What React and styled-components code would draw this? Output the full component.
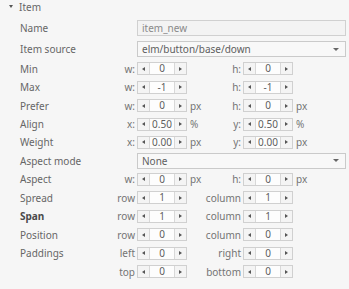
import React from 'react'
import styled, { createGlobalStyle } from 'styled-components'

const GlobalStyle = createGlobalStyle`
  html, body {
    margin: 0;
    padding: 0;
    background: #f6f6f6;
  }
  body {
    font-family: "Noto Sans", "DejaVu Sans", sans-serif;
    font-size: 10px;
    color: #666;
  }
`

const Panel = styled.div`
  width: 349px;
  height: 289px;
  overflow: hidden;
  background: #f6f6f6;
`

const Header = styled.div`
  display: flex;
  align-items: flex-start;
  height: 17.5px;
  line-height: 14px;
  padding-left: 9px;
`

const Caret = styled.span`
  width: 0;
  height: 0;
  margin-top: 5px;
  margin-right: 6px;
  border-left: 2.5px solid transparent;
  border-right: 2.5px solid transparent;
  border-top: 3px solid #555;
`

const Row = styled.div`
  display: grid;
  align-items: center;
  height: ${p => (p.$tall ? '21px' : '18.45px')};
  padding-left: 20px;
  grid-template-columns: ${p => (p.$wide ? '117px 209px' : '117px 50px 56px 50px 1fr')};
`

const LabelCell = styled.div`
  display: flex;
  justify-content: space-between;
  align-items: center;
  padding-right: 2px;
  white-space: nowrap;
`

const Label = styled.span`
  font-weight: ${p => (p.$bold ? 700 : 400)};
  color: ${p => (p.$bold ? '#4a4a4a' : '#666')};
`

const SubLabel = styled.span`
  color: #747474;
`

const MidCell = styled.div`
  display: flex;
  justify-content: space-between;
  align-items: center;
  padding-left: 3px;
  padding-right: 2px;
  white-space: nowrap;
`

const Unit = styled.span`
  color: #747474;
  padding-left: ${p => p.$pad || 0}px;
`

const SpinBox = styled.div`
  display: grid;
  grid-template-columns: 12px 1fr 12px;
  height: 13px;
  box-sizing: border-box;
  border: 1px solid #d0d0d0;
  background: #fbfbfb;
`

const SpinButton = styled.div`
  display: flex;
  align-items: center;
  justify-content: center;
  background: #f4f4f4;
  ${p => (p.$side === 'left' ? 'border-right: 1px solid #d8d8d8;' : 'border-left: 1px solid #d8d8d8;')}
`

const Arrow = styled.span`
  width: 0;
  height: 0;
  border-top: 2.5px solid transparent;
  border-bottom: 2.5px solid transparent;
  ${p => (p.$dir === 'left' ? 'border-right: 3px solid #555;' : 'border-left: 3px solid #555;')}
`

const SpinValue = styled.div`
  text-align: center;
  line-height: 11px;
  color: #5e5e5e;
  background: #fdfdfd;
`

const TextField = styled.div`
  height: 16px;
  box-sizing: border-box;
  border: 1px solid #d0d0d0;
  background: #f3f3f3;
  color: #8a8a8a;
  padding-left: 4px;
  line-height: 14px;
`

const Combo = styled.div`
  display: flex;
  align-items: center;
  justify-content: space-between;
  height: 16px;
  box-sizing: border-box;
  border: 1px solid #cacaca;
  background: #f8f8f8;
  color: #5e5e5e;
  padding: 0 6px 0 4px;
  line-height: 14px;
`

const ComboArrow = styled.span`
  width: 0;
  height: 0;
  border-left: 3px solid transparent;
  border-right: 3px solid transparent;
  border-top: 3px solid #666;
`

const Spinner = ({ value }) => (
  <SpinBox>
    <SpinButton $side="left">
      <Arrow $dir="left" />
    </SpinButton>
    <SpinValue>{value}</SpinValue>
    <SpinButton $side="right">
      <Arrow $dir="right" />
    </SpinButton>
  </SpinBox>
)

const rows = [
  { label: 'Min', a: 'w:', b: 'h:', va: '0', vb: '0' },
  { label: 'Max', a: 'w:', b: 'h:', va: '-1', vb: '-1' },
  { label: 'Prefer', a: 'w:', b: 'h:', va: '0', vb: '0', unit: 'px' },
  { label: 'Align', a: 'x:', b: 'y:', va: '0.50', vb: '0.50', unit: '%' },
  { label: 'Weight', a: 'x:', b: 'y:', va: '0.00', vb: '0.00', unit: 'px' },
  { combo: 'Aspect mode', value: 'None' },
  { label: 'Aspect', a: 'w:', b: 'h:', va: '0', vb: '0', unit: 'px' },
  { label: 'Spread', a: 'row', b: 'column', va: '1', vb: '1' },
  { label: 'Span', a: 'row', b: 'column', va: '1', vb: '1', bold: true },
  { label: 'Position', a: 'row', b: 'column', va: '0', vb: '0' },
  { label: 'Paddings', a: 'left', b: 'right', va: '0', vb: '0' },
  { label: '', a: 'top', b: 'bottom', va: '0', vb: '0' },
]

const PairRow = ({ row }) => (
  <Row>
    <LabelCell>
      <Label $bold={row.bold}>{row.label}</Label>
      <SubLabel>{row.a}</SubLabel>
    </LabelCell>
    <Spinner value={row.va} />
    <MidCell>
      <Unit>{row.unit}</Unit>
      <SubLabel>{row.b}</SubLabel>
    </MidCell>
    <Spinner value={row.vb} />
    <Unit $pad={3}>{row.unit}</Unit>
  </Row>
)

export default function App() {
  return (
    <Panel>
      <GlobalStyle />
      <Header>
        <Caret />
        <span>Item</span>
      </Header>
      <Row $tall $wide>
        <LabelCell>
          <Label>Name</Label>
        </LabelCell>
        <TextField>item_new</TextField>
      </Row>
      <Row $tall $wide>
        <LabelCell>
          <Label>Item source</Label>
        </LabelCell>
        <Combo>
          <span>elm/button/base/down</span>
          <ComboArrow />
        </Combo>
      </Row>
      {rows.map((row, i) =>
        row.combo ? (
          <Row key={i} $wide>
            <LabelCell>
              <Label>{row.combo}</Label>
            </LabelCell>
            <Combo>
              <span>{row.value}</span>
              <ComboArrow />
            </Combo>
          </Row>
        ) : (
          <PairRow key={i} row={row} />
        )
      )}
    </Panel>
  )
}
